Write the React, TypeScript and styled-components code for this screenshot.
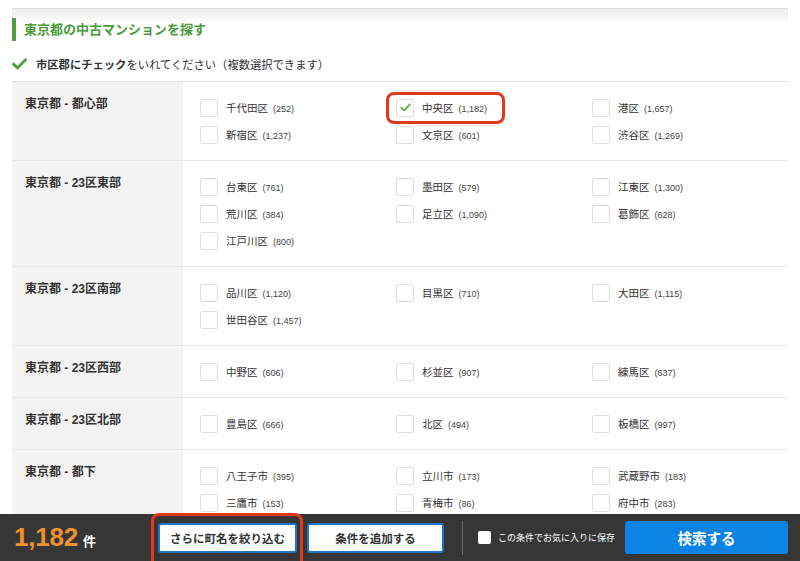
import React from "react";
import styled, { createGlobalStyle } from "styled-components";

const Global = createGlobalStyle`
  html, body { margin: 0; padding: 0; background: #fff; }
  body { font-family: "Liberation Sans", "Noto Sans CJK JP", sans-serif; color: #333; }
  * { box-sizing: border-box; }
`;

const Page = styled.div`
  padding: 8px 12px 60px;
`;

const HeaderBand = styled.div`
  border-top: 1px solid #dcdcdc;
  background: linear-gradient(#ececec 0, #ffffff 15px);
  padding-top: 9px;
`;

const Heading = styled.h2`
  margin: 0;
  border-left: 4px solid #4f9f3f;
  height: 23px;
  line-height: 23px;
  padding-left: 8px;
  font-size: 13px;
  font-weight: bold;
  color: #4a9a3a;
`;

const Instruction = styled.div`
  display: flex;
  align-items: center;
  gap: 9px;
  height: 18px;
  margin: 14px 0 8px;
  font-size: 11.3px;
  color: #333;
  strong { font-weight: bold; }
`;

const Table = styled.div`
  border-top: 1px solid #e3e3e3;
`;

const Row = styled.div`
  display: grid;
  grid-template-columns: 171px 1fr;
  border-bottom: 1px solid #e6e6e6;
`;

const AreaLabel = styled.div`
  background: #f3f3f3;
  padding: 13px 0 0 13px;
  font-size: 12px;
  line-height: 18px;
  font-weight: bold;
  color: #333;
`;

const Items = styled.div`
  display: grid;
  grid-template-columns: repeat(3, 196px);
  grid-auto-rows: 27px;
  padding: 12px 0 12px 17px;
`;

const Item = styled.label`
  position: relative;
  display: flex;
  align-items: center;
  gap: 8px;
  font-size: 10.5px;
  color: #333;
  white-space: nowrap;
`;

const Box = styled.span`
  width: 18px;
  height: 18px;
  border: 1px solid #dedede;
  border-radius: 2px;
  background: #fff;
  display: flex;
  align-items: center;
  justify-content: center;
  flex-shrink: 0;
`;

const Count = styled.span`
  font-size: 9px;
  margin-left: 5px;
  color: #444;
`;

const Highlight = styled.span<{ $w: number; $h: number; $l: number; $t: number }>`
  position: absolute;
  left: ${(p) => p.$l}px;
  top: ${(p) => p.$t}px;
  width: ${(p) => p.$w}px;
  height: ${(p) => p.$h}px;
  border: 3px solid #e2391c;
  border-radius: 8px;
  pointer-events: none;
`;

const Bar = styled.div`
  position: fixed;
  left: 0;
  right: 0;
  bottom: 0;
  height: 47px;
  background: #363636;
  display: flex;
  align-items: center;
  padding: 0 12px 0 14px;
`;

const Total = styled.div`
  width: 144px;
  display: flex;
  align-items: baseline;
  gap: 5px;
`;

const TotalNum = styled.span`
  font-size: 26px;
  font-weight: bold;
  color: #f0922c;
  letter-spacing: -0.2px;
`;

const TotalUnit = styled.span`
  font-size: 13px;
  font-weight: bold;
  color: #fff;
`;

const ButtonWrap = styled.div`
  position: relative;
  margin-right: 10px;
  display: flex;
`;

const OutlineButton = styled.button<{ $w: number }>`
  width: ${(p) => p.$w}px;
  height: 30px;
  background: #fff;
  border: 2px solid #1f76c4;
  border-radius: 3px;
  font-family: inherit;
  font-size: 11.5px;
  font-weight: bold;
  color: #333;
  padding: 0;
  white-space: nowrap;
`;

const Divider = styled.span`
  width: 1px;
  height: 34px;
  background: #6a6a6a;
  margin: 0 15px 0 8px;
`;

const SaveCheck = styled.label`
  display: flex;
  align-items: center;
  gap: 7px;
  font-size: 9px;
  color: #fff;
  flex: 1;
  white-space: nowrap;
`;

const SaveBox = styled.span`
  width: 13px;
  height: 13px;
  background: #fff;
  border-radius: 2px;
`;

const SearchButton = styled.button`
  width: 163px;
  height: 33px;
  background: #0b84e6;
  border: none;
  border-radius: 3px;
  color: #fff;
  font-family: inherit;
  font-size: 14.5px;
  font-weight: bold;
`;

type Ward = { name: string; count: string; checked?: boolean; mark?: boolean };
type Area = { label: string; wards: Ward[] };

const areas: Area[] = [
  {
    label: "東京都 - 都心部",
    wards: [
      { name: "千代田区", count: "252" },
      { name: "中央区", count: "1,182", checked: true, mark: true },
      { name: "港区", count: "1,657" },
      { name: "新宿区", count: "1,237" },
      { name: "文京区", count: "601" },
      { name: "渋谷区", count: "1,269" },
    ],
  },
  {
    label: "東京都 - 23区東部",
    wards: [
      { name: "台東区", count: "761" },
      { name: "墨田区", count: "579" },
      { name: "江東区", count: "1,300" },
      { name: "荒川区", count: "384" },
      { name: "足立区", count: "1,090" },
      { name: "葛飾区", count: "628" },
      { name: "江戸川区", count: "800" },
    ],
  },
  {
    label: "東京都 - 23区南部",
    wards: [
      { name: "品川区", count: "1,120" },
      { name: "目黒区", count: "710" },
      { name: "大田区", count: "1,115" },
      { name: "世田谷区", count: "1,457" },
    ],
  },
  {
    label: "東京都 - 23区西部",
    wards: [
      { name: "中野区", count: "606" },
      { name: "杉並区", count: "907" },
      { name: "練馬区", count: "637" },
    ],
  },
  {
    label: "東京都 - 23区北部",
    wards: [
      { name: "豊島区", count: "666" },
      { name: "北区", count: "494" },
      { name: "板橋区", count: "997" },
    ],
  },
  {
    label: "東京都 - 都下",
    wards: [
      { name: "八王子市", count: "395" },
      { name: "立川市", count: "173" },
      { name: "武蔵野市", count: "183" },
      { name: "三鷹市", count: "153" },
      { name: "青梅市", count: "86" },
      { name: "府中市", count: "283" },
    ],
  },
];

const BigCheck = () => (
  <svg width="15" height="12" viewBox="0 0 15 12">
    <path d="M1.5 6.2 L5.5 10 L13.5 1.8" fill="none" stroke="#4fa33c" strokeWidth="3" strokeLinecap="round" strokeLinejoin="round" />
  </svg>
);

const SmallCheck = () => (
  <svg width="11" height="9" viewBox="0 0 11 9">
    <path d="M1.2 4.6 L4.2 7.4 L9.8 1.4" fill="none" stroke="#5aae44" strokeWidth="1.8" strokeLinecap="round" strokeLinejoin="round" />
  </svg>
);

export default function App() {
  return (
    <>
      <Global />
      <Page>
        <HeaderBand>
          <Heading>東京都の中古マンションを探す</Heading>
        </HeaderBand>
        <Instruction>
          <BigCheck />
          <span>
            <strong>市区郡にチェック</strong>をいれてください（複数選択できます）
          </span>
        </Instruction>
        <Table>
          {areas.map((a) => (
            <Row key={a.label}>
              <AreaLabel>{a.label}</AreaLabel>
              <Items>
                {a.wards.map((w) => (
                  <Item key={w.name}>
                    <Box>{w.checked && <SmallCheck />}</Box>
                    <span>
                      {w.name}
                      <Count>({w.count})</Count>
                    </span>
                    {w.mark && <Highlight $l={-10} $t={-2} $w={119} $h={32} />}
                  </Item>
                ))}
              </Items>
            </Row>
          ))}
        </Table>
      </Page>
      <Bar>
        <Total>
          <TotalNum>1,182</TotalNum>
          <TotalUnit>件</TotalUnit>
        </Total>
        <ButtonWrap>
          <OutlineButton $w={139}>さらに町名を絞り込む</OutlineButton>
          <Highlight $l={-7} $t={-10} $w={152} $h={56} />
        </ButtonWrap>
        <ButtonWrap>
          <OutlineButton $w={137}>条件を追加する</OutlineButton>
        </ButtonWrap>
        <Divider />
        <SaveCheck>
          <SaveBox />
          この条件でお気に入りに保存
        </SaveCheck>
        <SearchButton>検索する</SearchButton>
      </Bar>
    </>
  );
}
